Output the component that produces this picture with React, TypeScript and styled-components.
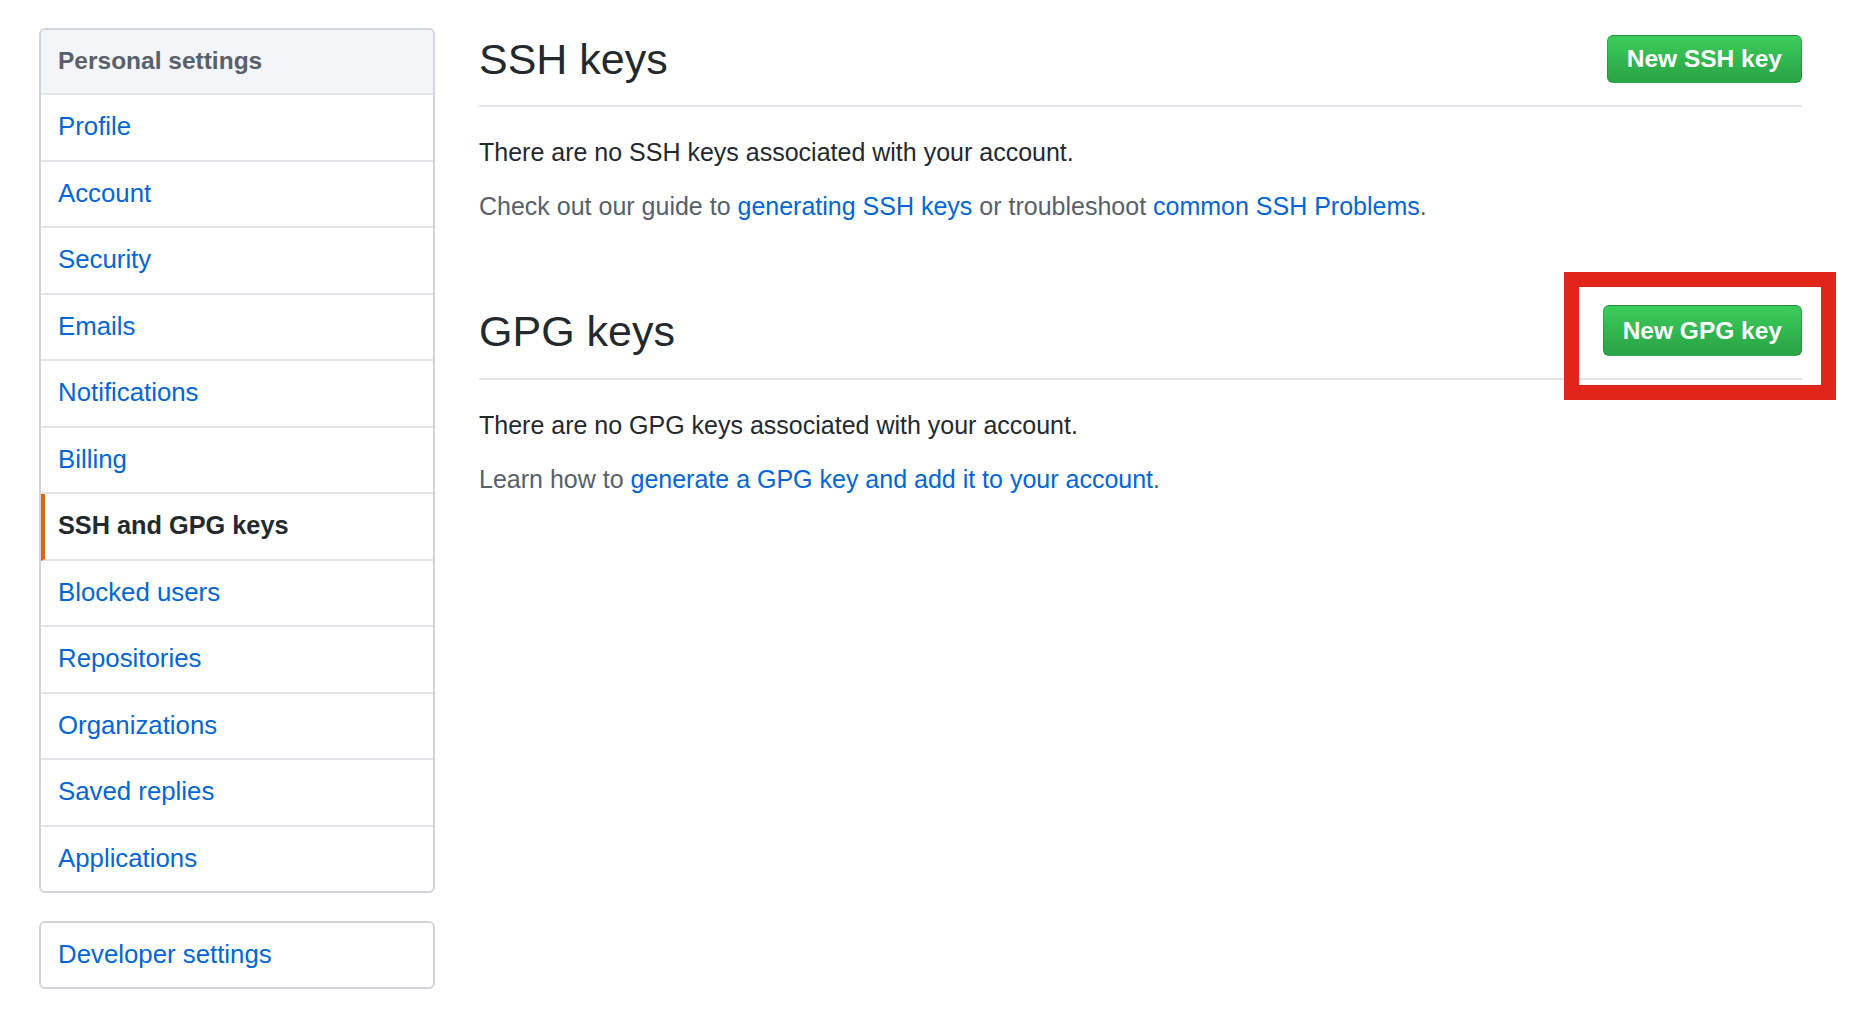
import React from 'react';
import styled, { createGlobalStyle } from 'styled-components';

const GlobalStyle = createGlobalStyle`
    html, body {
        margin: 0;
        padding: 0;
        background: #ffffff;
    }
    body {
        font-family: "Liberation Sans", Arial, Helvetica, sans-serif;
        color: #24292e;
    }
`;

const Page = styled.div`
    display: flex;
    align-items: flex-start;
    gap: 44px;
    padding: 28px 68px 0 39px;
    min-height: 988px;
`;

const SideColumn = styled.aside`
    display: flex;
    flex-direction: column;
    gap: 28px;
    width: 396px;
    flex-shrink: 0;
`;

const Menu = styled.nav`
    display: flex;
    flex-direction: column;
    border: 2px solid #d1d5da;
    border-radius: 6px;
    overflow: hidden;
    background: #fff;
`;

const MenuHeading = styled.div`
    display: flex;
    align-items: center;
    height: 65px;
    flex-shrink: 0;
    padding: 0 0 1px 17px;
    box-sizing: border-box;
    background: #f3f5f8;
    border-bottom: 2px solid #e1e4e8;
    color: #586069;
    font-size: 24.5px;
    font-weight: 700;
`;

const MenuItem = styled.a<{ $selected?: boolean; $last?: boolean; $height?: number }>`
    display: flex;
    align-items: center;
    height: ${(p) => p.$height ?? 66.5}px;
    flex-shrink: 0;
    padding: 0 0 1px ${(p) => (p.$selected ? '13px' : '17px')};
    box-sizing: border-box;
    border-bottom: ${(p) => (p.$last ? 'none' : '2px solid #e1e4e8')};
    border-left: ${(p) => (p.$selected ? '4px solid #e36209' : 'none')};
    color: ${(p) => (p.$selected ? '#24292e' : '#0366d6')};
    font-size: ${(p) => (p.$selected ? '25.3px' : '25.8px')};
    font-weight: ${(p) => (p.$selected ? 700 : 400)};
    text-decoration: none;
    cursor: pointer;
`;

const Main = styled.main`
    flex: 1;
    display: flex;
    flex-direction: column;
`;

const Section = styled.section<{ $spaced?: boolean }>`
    margin-top: ${(p) => (p.$spaced ? '73px' : '0')};
`;

const Subhead = styled.div`
    display: flex;
    align-items: center;
    justify-content: space-between;
    padding: 7px 0 22px;
    border-bottom: 2px solid #e1e4e8;
`;

const Heading = styled.h2`
    margin: 0;
    font-size: 43px;
    font-weight: 400;
    line-height: 48px;
    color: #24292e;
`;

const ButtonWrap = styled.span`
    position: relative;
    display: inline-flex;
`;

const GreenButton = styled.button<{ $tall?: boolean }>`
    height: ${(p) => (p.$tall ? '51px' : '48px')};
    padding: 0 19px;
    border: 1px solid rgba(27, 31, 35, 0.2);
    border-radius: 6px;
    background-color: #28a745;
    background-image: linear-gradient(-180deg, #3ccd5c 0%, #2ba646 90%);
    color: #fff;
    font-family: "Liberation Sans", Arial, Helvetica, sans-serif;
    font-size: 24.5px;
    font-weight: 700;
    cursor: pointer;
`;

const Highlight = styled.span`
    position: absolute;
    top: -33px;
    left: -39px;
    right: -34px;
    bottom: -44px;
    border: 15px solid #e0261b;
    pointer-events: none;
`;

const Text = styled.p<{ $muted?: boolean }>`
    margin: ${(p) => (p.$muted ? '17px 0 0' : '27px 0 0')};
    font-size: 25px;
    line-height: 37px;
    color: ${(p) => (p.$muted ? '#586069' : '#24292e')};
`;

const Link = styled.a`
    color: #0366d6;
    text-decoration: none;
`;

const menuItems = [
    'Profile',
    'Account',
    'Security',
    'Emails',
    'Notifications',
    'Billing',
    'SSH and GPG keys',
    'Blocked users',
    'Repositories',
    'Organizations',
    'Saved replies',
    'Applications',
];

const App: React.FC = () => {
    return (
        <>
            <GlobalStyle />
            <Page>
                <SideColumn>
                    <Menu>
                        <MenuHeading>Personal settings</MenuHeading>
                        {menuItems.map((item, i) => (
                            <MenuItem
                                key={item}
                                $selected={item === 'SSH and GPG keys'}
                                $last={i === menuItems.length - 1}
                                $height={i === menuItems.length - 1 ? 64.5 : 66.5}
                            >
                                {item}
                            </MenuItem>
                        ))}
                    </Menu>
                    <Menu>
                        <MenuItem $last $height={64}>
                            Developer settings
                        </MenuItem>
                    </Menu>
                </SideColumn>

                <Main>
                    <Section>
                        <Subhead>
                            <Heading>SSH keys</Heading>
                            <GreenButton>New SSH key</GreenButton>
                        </Subhead>
                        <Text>There are no SSH keys associated with your account.</Text>
                        <Text $muted>
                            Check out our guide to <Link>generating SSH keys</Link> or troubleshoot{' '}
                            <Link>common SSH Problems</Link>.
                        </Text>
                    </Section>

                    <Section $spaced>
                        <Subhead>
                            <Heading>GPG keys</Heading>
                            <ButtonWrap>
                                <GreenButton $tall>New GPG key</GreenButton>
                                <Highlight />
                            </ButtonWrap>
                        </Subhead>
                        <Text>There are no GPG keys associated with your account.</Text>
                        <Text $muted>
                            Learn how to <Link>generate a GPG key and add it to your account</Link>.
                        </Text>
                    </Section>
                </Main>
            </Page>
        </>
    );
};

export default App;
